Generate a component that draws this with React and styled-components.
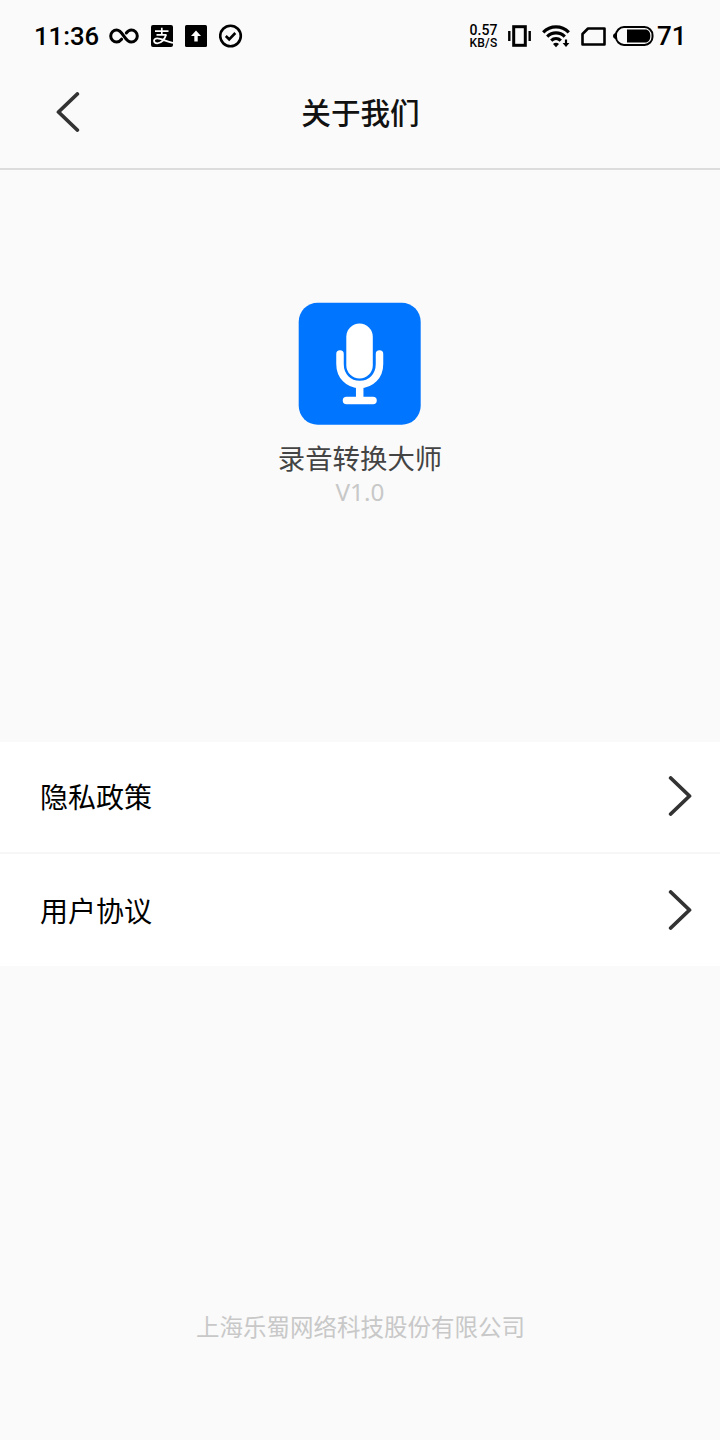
import React from 'react';
import styled, { createGlobalStyle } from 'styled-components';

const GlobalStyle = createGlobalStyle`
    * {
        box-sizing: border-box;
    }
    body {
        margin: 0;
        background: #fafafa;
        font-family: "Noto Sans CJK SC", sans-serif;
    }
    svg {
        display: block;
        flex: none;
    }
`;

const Page = styled.div`
    display: flex;
    flex-direction: column;
    width: 720px;
    height: 1440px;
    background: #fafafa;
`;

const StatusBar = styled.div`
    display: flex;
    align-items: center;
    justify-content: space-between;
    height: 72px;
    padding: 0 34px 0 34px;
    color: #000;
    font-family: Roboto, sans-serif;
    font-weight: 500;
`;

const StatusGroup = styled.div`
    display: flex;
    align-items: center;
    gap: ${props => props.$gap};
`;

const StatusText = styled.span`
    width: ${props => props.$width};
    font-size: ${props => props.$size || '26px'};
    line-height: 30px;
    white-space: nowrap;
`;

const Speed = styled.div`
    width: 29px;
    margin-right: -1px;
    font-size: 12px;
    line-height: 12px;
    text-align: center;
    white-space: nowrap;
    letter-spacing: 0.2px;
    span {
        display: block;
    }
    span:first-child {
        font-size: 14px;
        line-height: 13px;
        letter-spacing: 0;
    }
`;

const Power = styled.div`
    display: flex;
    align-items: center;
    gap: 3px;
    margin-left: -4px;
`;

const NavBar = styled.div`
    display: grid;
    grid-template-columns: 1fr auto 1fr;
    align-items: center;
    height: 98px;
    padding: 0 55px 16px 56px;
    border-bottom: 2px solid #dcdcdc;
`;

const Title = styled.h1`
    margin: 0;
    padding-bottom: 1px;
    font-size: 29.6px;
    line-height: 40px;
    font-weight: 500;
    color: #111;
`;

const Hero = styled.div`
    display: flex;
    flex-direction: column;
    align-items: center;
    height: 572px;
    padding-top: 132px;
`;

const AppName = styled.div`
    margin-top: 13px;
    font-size: 27.4px;
    line-height: 36px;
    color: #444;
`;

const Version = styled.div`
    padding-top: 1px;
    font-family: "Noto Sans", sans-serif;
    font-size: 24.3px;
    line-height: 32px;
    color: #c8c8c8;
`;

const Menu = styled.div`
    height: 224px;
    background: #fff;
`;

const MenuItem = styled.div`
    display: flex;
    align-items: center;
    justify-content: space-between;
    height: ${props => props.$height};
    padding: 0 28px ${props => props.$bottom} 40px;
    font-size: 28px;
    line-height: 40px;
    color: #000;
    & + & {
        border-top: 2px solid #f7f7f7;
    }
`;

const Footer = styled.div`
    margin-top: auto;
    padding: 0 0 97px 1px;
    text-align: center;
    font-size: 23.5px;
    line-height: 34px;
    color: #c8c8c8;
`;

const InfinityIcon = () => (
    <svg width="30" height="18" viewBox="0 0 30 18" fill="none" stroke="#000" strokeWidth="3" strokeLinecap="round">
        <path d="M12.6 12.2C11 14.2 9.6 15 7.7 15A6 6 0 0 1 7.7 3C14 3 15.500 15 22.300 15A6 6 0 0 0 22.300 3C20.300 3 18.800 4.100 17.300 6" />
    </svg>
);

const PayIcon = () => (
    <svg width="22" height="22" viewBox="0 0 22 22" fill="none" stroke="#fff">
        <rect width="22" height="22" rx="2" fill="#000" stroke="none" />
        <path d="M4 6.200H17.500M10.800 2.800V9.500M5.500 9.800H15.500" strokeWidth="1.700" />
        <path d="M15 9.800C14 14 10.500 18.300 6.300 18.300C2 18.300 2 13.400 6.200 13.400C10 13.400 14 15.900 22 18" strokeWidth="1.800" />
    </svg>
);

const UploadIcon = () => (
    <svg width="22" height="22" viewBox="0 0 22 22">
        <rect width="22" height="22" rx="1.500" fill="#000" />
        <path d="M11 5.500L16 11H12.700V16.500H9.300V11H6Z" fill="#fff" />
    </svg>
);

const CheckIcon = () => (
    <svg width="24" height="24" viewBox="0 0 24 24" fill="none" stroke="#000" strokeWidth="2.600">
        <circle cx="11.500" cy="12" r="10.300" />
        <path d="M6.800 12L10.200 15.300L16.300 9" />
    </svg>
);

const VibrateIcon = () => (
    <svg width="23" height="22" viewBox="0 0 23 22" fill="none" stroke="#000">
        <rect x="5.700" y="1.700" width="11.600" height="18.600" strokeWidth="3" />
        <path d="M1.300 6V16M21.700 6V16" strokeWidth="2.400" />
    </svg>
);

const WifiIcon = () => (
    <svg width="28" height="24" viewBox="0 0 28 24" fill="none" stroke="#000">
        <path d="M1.200 8.300C8.500 1 19.500 1 26.800 8.300" strokeWidth="3.200" />
        <path d="M5.200 12.600C10.200 7.700 17.800 7.700 22.800 12.600" strokeWidth="3.200" />
        <path d="M9.200 16.700C12 14 16 14 18.800 16.700" strokeWidth="3.200" />
        <path d="M11 20C12.800 18.400 15.200 18.400 17 20L14 23.200Z" fill="#000" stroke="none" />
        <path d="M24 15.500V20" strokeWidth="2.200" />
        <path d="M20.600 19H27.400L24 23Z" fill="#000" stroke="none" />
    </svg>
);

const SimIcon = () => (
    <svg width="25" height="19" viewBox="0 0 25 19" fill="none" stroke="#000" strokeWidth="2.600">
        <path d="M7 1.500H23.500V17.500H1.500V7Z" strokeLinejoin="round" />
    </svg>
);

const BatteryIcon = () => (
    <svg width="41" height="20" viewBox="0 0 41 20">
        <path d="M4 6.500C1.500 7 0 8.300 0 10C0 11.700 1.500 13 4 13.500Z" fill="#000" />
        <rect x="3" y="1.100" width="36.500" height="17.800" rx="8" fill="none" stroke="#000" strokeWidth="2" />
        <path d="M14 3.500H32C35.500 3.500 37.300 6 37.300 10C37.300 14 35.500 16.500 32 16.500H14Z" fill="#000" />
    </svg>
);

const Chevron = ({ back }) => (
    <svg width="24" height="40" viewBox="0 0 24 40" fill="none" stroke="#333" strokeWidth="3.800" strokeLinecap="round" strokeLinejoin="round">
        <path d={back ? 'M21.300 2L2.500 20L21.300 38' : 'M2.700 2L21.500 20L2.700 38'} />
    </svg>
);

const Logo = () => (
    <svg width="124" height="124" viewBox="0 0 124 124">
        <rect x="0.700" y="0.700" width="122" height="122" rx="19" fill="#0075ff" />
        <rect x="48.300" y="21.500" width="26.500" height="55" rx="13.250" fill="#fff" />
        <g fill="none" stroke="#fff" strokeWidth="7.500" strokeLinecap="round">
            <path d="M42 52V62C42 74 50.500 82.500 61.700 82.500C73 82.500 81.500 74 81.500 62V52" />
            <path d="M61.700 84V98" />
            <path d="M48.500 98.500H75" />
        </g>
    </svg>
);

const items = [
    { label: '隐私政策', height: '110px', bottom: '2px' },
    { label: '用户协议', height: '114px', bottom: '0' },
];

const App = () => (
    <Page>
        <GlobalStyle />
        <StatusBar>
            <StatusGroup $gap="12px">
                <StatusText $width="63px" $size="25.7px">11:36</StatusText>
                <InfinityIcon />
                <PayIcon />
                <UploadIcon />
                <CheckIcon />
            </StatusGroup>
            <StatusGroup $gap="11px">
                <Speed>
                    <span>0.57</span>
                    <span>KB/S</span>
                </Speed>
                <VibrateIcon />
                <WifiIcon />
                <SimIcon />
                <Power>
                    <BatteryIcon />
                    <StatusText $width="29px">71</StatusText>
                </Power>
            </StatusGroup>
        </StatusBar>
        <NavBar>
            <Chevron back />
            <Title>关于我们</Title>
        </NavBar>
        <Hero>
            <Logo />
            <AppName>录音转换大师</AppName>
            <Version>V1.0</Version>
        </Hero>
        <Menu>
            {items.map(item => (
                <MenuItem key={item.label} $height={item.height} $bottom={item.bottom}>
                    {item.label}
                    <Chevron />
                </MenuItem>
            ))}
        </Menu>
        <Footer>上海乐蜀网络科技股份有限公司</Footer>
    </Page>
);

export default App;
